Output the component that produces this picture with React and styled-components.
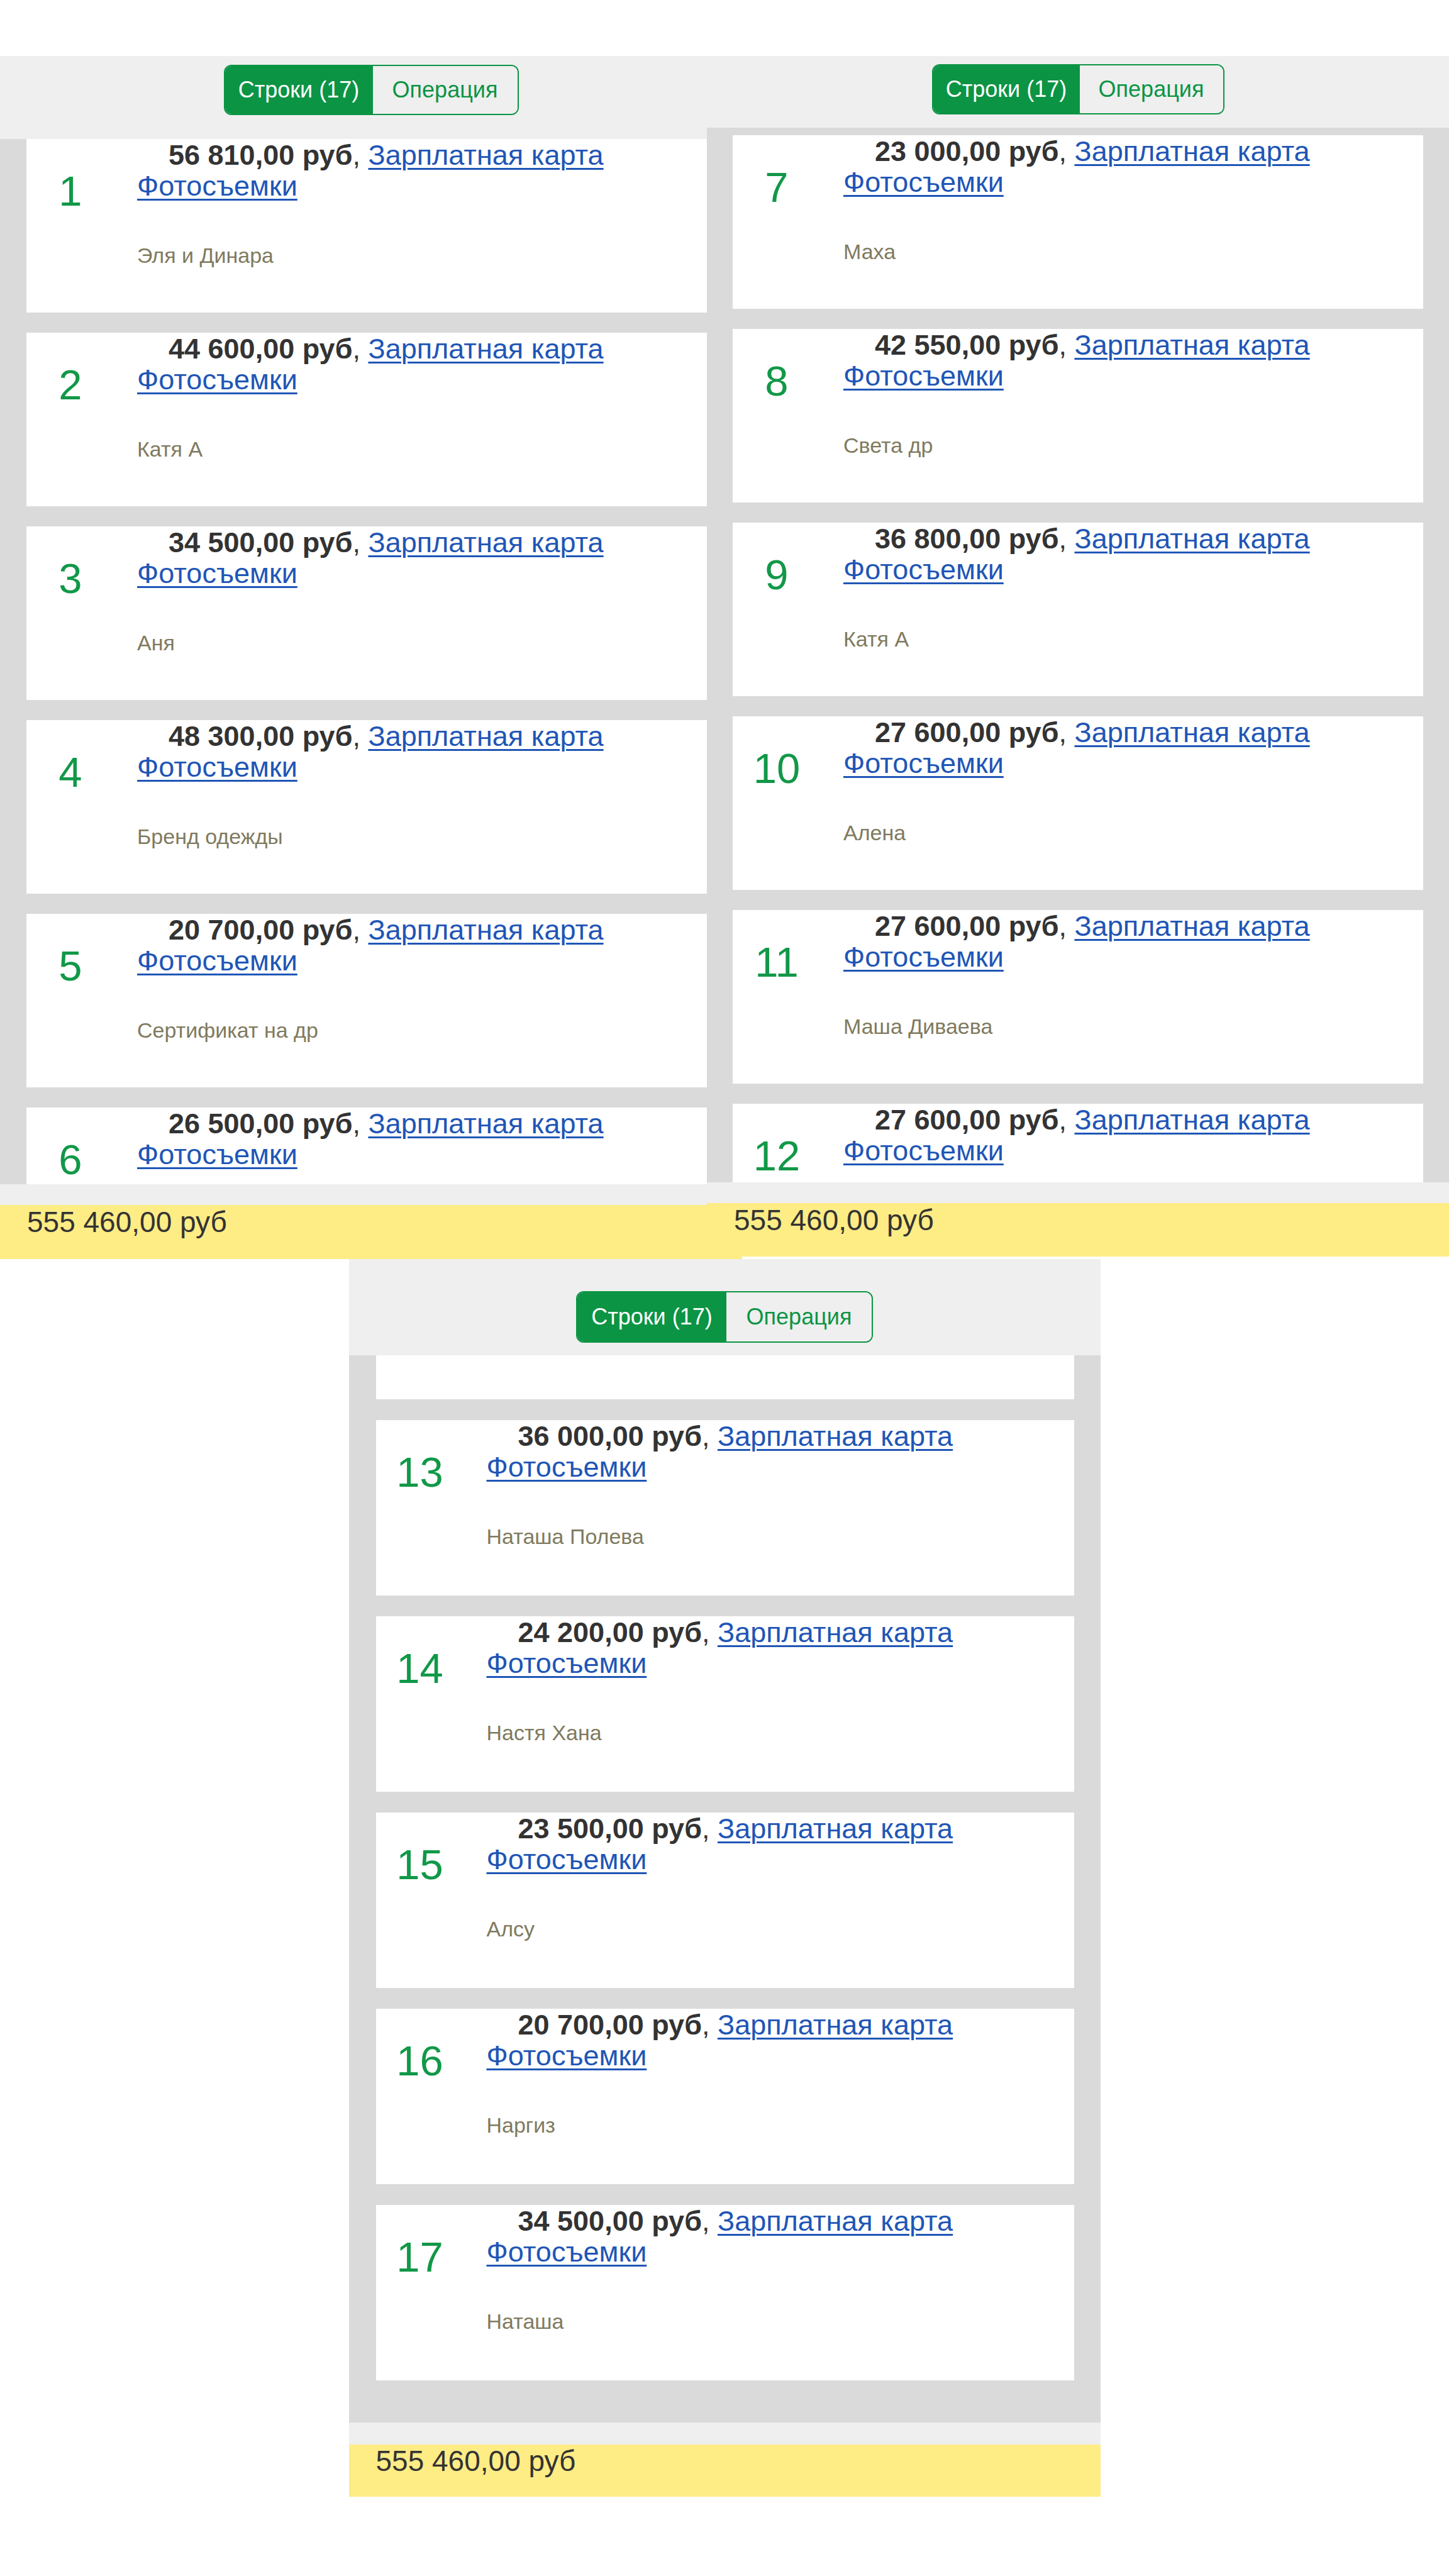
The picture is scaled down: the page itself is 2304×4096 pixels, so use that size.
import React from "react";
import styled, { createGlobalStyle } from "styled-components";

const GREEN = "#0b9444";
const HEADER_BG = "#efefef";
const LIST_BG = "#dadada";
const YELLOW = "#feec85";

const GlobalStyle = createGlobalStyle`
  html, body {
    margin: 0;
    padding: 0;
    background: #ffffff;
  }
  body {
    font-family: "Liberation Sans", Arial, sans-serif;
  }
`;

const rows = [
  { n: 1, sum: "56 810,00", name: "Эля и Динара" },
  { n: 2, sum: "44 600,00", name: "Катя А" },
  { n: 3, sum: "34 500,00", name: "Аня" },
  { n: 4, sum: "48 300,00", name: "Бренд одежды" },
  { n: 5, sum: "20 700,00", name: "Сертификат на др" },
  { n: 6, sum: "26 500,00", name: "" },
  { n: 7, sum: "23 000,00", name: "Маха" },
  { n: 8, sum: "42 550,00", name: "Света др" },
  { n: 9, sum: "36 800,00", name: "Катя А" },
  { n: 10, sum: "27 600,00", name: "Алена" },
  { n: 11, sum: "27 600,00", name: "Маша Диваева" },
  { n: 12, sum: "27 600,00", name: "" },
  { n: 13, sum: "36 000,00", name: "Наташа Полева" },
  { n: 14, sum: "24 200,00", name: "Настя Хана" },
  { n: 15, sum: "23 500,00", name: "Алсу" },
  { n: 16, sum: "20 700,00", name: "Наргиз" },
  { n: 17, sum: "34 500,00", name: "Наташа" },
];

const screens = [
  {
    key: "a",
    width: 1180,
    header: { h: 132, top: 14, btnH: 80, seg: [235, 230] },
    list: { h: 1662, top: 0, left: 42, right: 41, card: 276, gap: 32 },
    strip: 33,
    total: { h: 86, lh: 54 },
    items: rows.slice(0, 6),
  },
  {
    key: "b",
    width: 1180,
    shift: -56,
    header: { h: 114, top: 13, btnH: 80, seg: [233, 228] },
    list: { h: 1677, top: 12, left: 41, right: 41, card: 276, gap: 32 },
    strip: 33,
    total: { h: 85, lh: 54 },
    items: rows.slice(6, 12),
  },
];

const third = {
  width: 1195,
  header: { h: 153, top: 51, btnH: 82, seg: [237, 231] },
  list: { h: 1697, top: 0, left: 43, right: 42, card: 279, gap: 33, stub: 70 },
  strip: 35,
  total: { h: 83, lh: 52 },
  items: rows.slice(12),
};

const Page = styled.div`
  width: 2304px;
  min-height: 4096px;
  background: #ffffff;
  overflow: hidden;
`;

const TopRow = styled.div`
  display: flex;
  align-items: flex-start;
  padding-top: 89px;
`;

const Panel = styled.section`
  flex-shrink: 0;
  width: ${(p) => p.$w}px;
  margin-left: ${(p) => p.$shift || 0}px;
  display: flex;
  flex-direction: column;
`;

const CenterPanel = styled(Panel)`
  margin: 0 auto;
`;

const Header = styled.div`
  box-sizing: border-box;
  height: ${(p) => p.$h}px;
  padding-top: ${(p) => p.$top}px;
  background: ${HEADER_BG};
  display: flex;
  justify-content: center;
  align-items: flex-start;
`;

const Switch = styled.div`
  display: flex;
  box-sizing: border-box;
  height: ${(p) => p.$h}px;
  border: 2.5px solid ${GREEN};
  border-radius: 12px;
  overflow: hidden;
`;

const Segment = styled.div`
  width: ${(p) => p.$w}px;
  display: flex;
  align-items: center;
  justify-content: center;
  font-size: 36px;
  background: ${(p) => (p.$active ? GREEN : HEADER_BG)};
  color: ${(p) => (p.$active ? "#ffffff" : GREEN)};
`;

const List = styled.div`
  box-sizing: border-box;
  height: ${(p) => p.$h}px;
  padding: ${(p) => p.$top}px ${(p) => p.$right}px 0 ${(p) => p.$left}px;
  background: ${LIST_BG};
  overflow: hidden;
  display: flex;
  flex-direction: column;
  gap: ${(p) => p.$gap}px;
`;

const Card = styled.div`
  flex-shrink: 0;
  height: ${(p) => p.$h}px;
  background: #ffffff;
  display: flex;
  align-items: flex-start;
`;

const CardTail = styled.div`
  flex-shrink: 0;
  height: ${(p) => p.$h}px;
  background: #ffffff;
`;

const Num = styled.div`
  width: 140px;
  flex-shrink: 0;
  padding-top: 49px;
  text-align: center;
  font-size: 67px;
  line-height: 67px;
  color: #119848;
`;

const Body = styled.div`
  flex: 1;
  min-width: 0;
  padding-left: 36px;
  padding-top: 1px;
`;

const Line = styled.div`
  font-size: 45px;
  line-height: 49px;
  text-indent: 50px;
  color: #333333;
`;

const Sum = styled.b`
  font-weight: 700;
`;

const Link = styled.a`
  color: #1f56b6;
  text-decoration: underline;
  text-decoration-thickness: 3px;
  text-underline-offset: 5px;
`;

const Name = styled.div`
  margin-top: 67px;
  font-size: 34px;
  line-height: 38px;
  color: #7f7a5e;
`;

const Strip = styled.div`
  height: ${(p) => p.$h}px;
  background: ${HEADER_BG};
`;

const Total = styled.div`
  box-sizing: border-box;
  height: ${(p) => p.$h}px;
  padding-left: 43px;
  background: ${YELLOW};
  font-size: 46px;
  line-height: ${(p) => p.$lh}px;
  color: #333333;
`;

const Row = ({ item, h }) => (
  <Card $h={h}>
    <Num>{item.n}</Num>
    <Body>
      <Line>
        <Sum>{item.sum} руб</Sum>, <Link href="#">Зарплатная карта</Link>{" "}
        <Link href="#">Фотосъемки</Link>
      </Line>
      {item.name && <Name>{item.name}</Name>}
    </Body>
  </Card>
);

const Screen = ({ s, as: Wrap = Panel }) => (
  <Wrap $w={s.width} $shift={s.shift}>
    <Header $h={s.header.h} $top={s.header.top}>
      <Switch $h={s.header.btnH}>
        <Segment $w={s.header.seg[0]} $active>
          Строки (17)
        </Segment>
        <Segment $w={s.header.seg[1]}>Операция</Segment>
      </Switch>
    </Header>
    <List
      $h={s.list.h}
      $top={s.list.top}
      $left={s.list.left}
      $right={s.list.right}
      $gap={s.list.gap}
    >
      {s.list.stub && <CardTail $h={s.list.stub} />}
      {s.items.map((item) => (
        <Row key={item.n} item={item} h={s.list.card} />
      ))}
    </List>
    <Strip $h={s.strip} />
    <Total $h={s.total.h} $lh={s.total.lh}>
      555 460,00 руб
    </Total>
  </Wrap>
);

export default function App() {
  return (
    <Page>
      <GlobalStyle />
      <TopRow>
        {screens.map((s) => (
          <Screen key={s.key} s={s} />
        ))}
      </TopRow>
      <Screen s={third} as={CenterPanel} />
    </Page>
  );
}
